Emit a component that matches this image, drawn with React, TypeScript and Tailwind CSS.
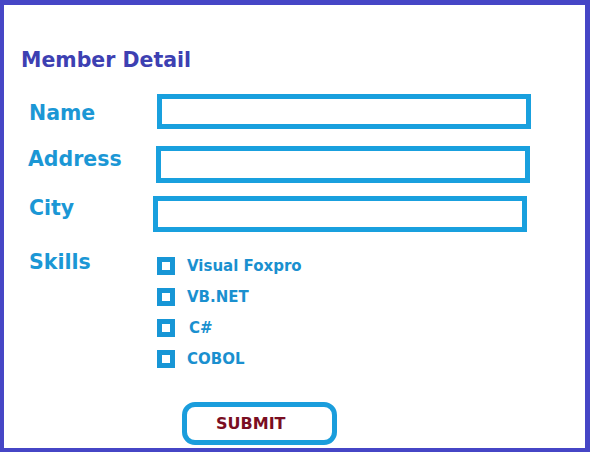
import React from "react";

const font = { fontFamily: '"DejaVu Sans", Verdana, sans-serif' };

function Checkbox({ label, extra = "" }: { label: string; extra?: string }) {
  return (
    <div className="flex items-start h-[18px]">
      <div className="w-[18px] h-[18px] border-[5px] border-[#1796d6] bg-white shrink-0" />
      <span className={`ml-[12px] text-[15px] leading-[17px] font-bold text-[#1a90cf] mt-[1px] ${extra}`}>{label}</span>
    </div>
  );
}

export default function App() {
  return (
    <div className="w-[593px] h-[452px] bg-white" style={font}>
      <div className="w-[590px] h-[452px] border-l-4 border-t-[5px] border-r-[5px] border-b-4 border-[#4646c6] flex flex-col">
        <div className="pl-[17px] pt-[43px] text-[20.5px] leading-[24px] font-bold text-[#3d40b2]">
          Member Detail
        </div>

        <div className="flex flex-col pl-[24px]">
          <div className="flex items-start mt-[22px]">
            <div className="w-[125px] mt-[7px] pl-[1px] text-[20.5px] leading-[24px] font-bold text-[#1b97d5]">Name</div>
            <div className="ml-[4px] w-[374px] h-[35px] border-[5px] border-[#19a0de]" />
          </div>
          <div className="flex items-start mt-[17px]">
            <div className="w-[125px] mt-[1px] text-[20.5px] leading-[24px] font-bold text-[#1b97d5]">Address</div>
            <div className="ml-[3px] w-[374px] h-[37px] border-[5px] border-[#19a0de]" />
          </div>
          <div className="flex items-start mt-[13px]">
            <div className="w-[125px] mt-0 pl-[1px] text-[20.5px] leading-[24px] font-bold text-[#1b97d5]">City</div>
            <div className="w-[374px] h-[36px] border-[5px] border-[#19a0de]" />
          </div>
          <div className="flex items-start mt-[18px]">
            <div className="w-[125px] pl-[1px] text-[20.5px] leading-[24px] font-bold text-[#1b97d5]">Skills</div>
            <div className="ml-[4px] pt-[7px] flex flex-col gap-[13px]">
              <Checkbox label="Visual Foxpro" />
              <Checkbox label="VB.NET" />
              <Checkbox label="C#" extra="ml-[14px]" />
              <Checkbox label="COBOL" />
            </div>
          </div>
        </div>

        <div className="pl-[178px] mt-[34px]">
          <button className="w-[155px] h-[43px] border-[5px] border-[#1a9ddc] rounded-[13px] bg-white flex items-center pl-[29px] text-[16px] leading-[18px] font-bold text-[#7a0e22]" style={font}>
            SUBMIT
          </button>
        </div>
      </div>
    </div>
  );
}
